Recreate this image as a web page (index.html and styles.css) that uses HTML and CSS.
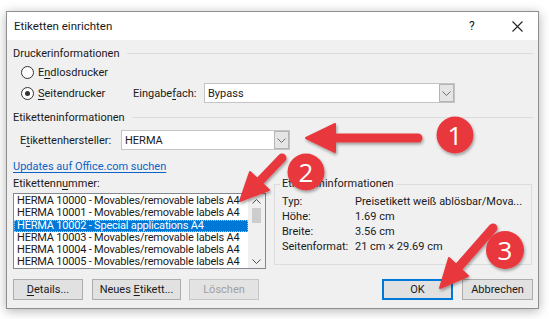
FILE: index.html
```html
<!DOCTYPE html>
<html lang="de">
<head>
    <meta charset="UTF-8">
    <title>Etiketten einrichten</title>
    <link rel="stylesheet" href="styles.css">
</head>
<body>
    <div class="dialog">
        <div class="titlebar">
            <span class="title">Etiketten einrichten</span>
            <span class="tb-help">?</span>
            <span class="tb-close">
                <svg width="11" height="11" viewBox="0 0 11 11"><path d="M0.5 0.5 L10.5 10.5 M10.5 0.5 L0.5 10.5" stroke="#222" stroke-width="1.1"/></svg>
            </span>
        </div>

        <div class="content">
            <div class="group-head"><span>Druckerinformationen</span></div>

            <div class="row radio-row first">
                <span class="radio"></span>
                <span>E<u>n</u>dlosdrucker</span>
            </div>
            <div class="row radio-row">
                <span class="radio checked"></span>
                <span class="radio-label"><u>S</u>eitendrucker</span>
                <span class="field-label">Eingabe<u>f</u>ach:</span>
                <div class="combo combo-tray">
                    <span class="combo-text">Bypass</span>
                    <span class="drop"><svg width="9" height="5" viewBox="0 0 9 5"><path d="M0.5 0.5 L4.5 4.5 L8.5 0.5" fill="none" stroke="#707070"/></svg></span>
                </div>
            </div>

            <div class="group-head second"><span>Etiketteninformationen</span></div>

            <div class="row maker-row">
                <span class="maker-label">E<u>t</u>ikettenhersteller:</span>
                <div class="combo combo-maker">
                    <span class="combo-text">HERMA</span>
                    <span class="drop"><svg width="9" height="5" viewBox="0 0 9 5"><path d="M0.5 0.5 L4.5 4.5 L8.5 0.5" fill="none" stroke="#707070"/></svg></span>
                </div>
            </div>

            <a class="link" href="#">Updates auf Office.com suchen</a>

            <div class="lower">
                <div class="list-col">
                    <div class="list-label">Etikettenn<u>u</u>mmer:</div>
                    <div class="listbox">
                        <div class="items">
                            <div class="item">HERMA 10000 - Movables/removable labels A4</div>
                            <div class="item">HERMA 10001 - Movables/removable labels A4</div>
                            <div class="item selected">HERMA 10002 - Special applications A4</div>
                            <div class="item">HERMA 10003 - Movables/removable labels A4</div>
                            <div class="item">HERMA 10004 - Movables/removable labels A4</div>
                            <div class="item">HERMA 10005 - Movables/removable labels A4</div>
                        </div>
                        <div class="scrollbar">
                            <span class="sb-arrow"><svg width="9" height="5" viewBox="0 0 9 5"><path d="M0.5 4.5 L4.5 0.5 L8.5 4.5" fill="none" stroke="#505050"/></svg></span>
                            <span class="sb-thumb"></span>
                            <span class="sb-track"></span>
                            <span class="sb-arrow"><svg width="9" height="5" viewBox="0 0 9 5"><path d="M0.5 0.5 L4.5 4.5 L8.5 0.5" fill="none" stroke="#505050"/></svg></span>
                        </div>
                    </div>
                </div>

                <fieldset class="info">
                    <legend>Etiketteninformationen</legend>
                    <div class="info-row"><span class="info-key">Typ:</span><span>Preisetikett weiß ablösbar/Mova...</span></div>
                    <div class="info-row"><span class="info-key">Höhe:</span><span>1.69 cm</span></div>
                    <div class="info-row"><span class="info-key">Breite:</span><span>3.56 cm</span></div>
                    <div class="info-row"><span class="info-key">Seitenformat:</span><span>21 cm × 29.69 cm</span></div>
                </fieldset>
            </div>

            <div class="buttons">
                <button class="btn btn-details"><u>D</u>etails...</button>
                <button class="btn btn-new">Neues <u>E</u>tikett...</button>
                <button class="btn btn-delete" disabled>Löschen</button>
                <button class="btn btn-ok">OK</button>
                <button class="btn btn-cancel">Abbrechen</button>
            </div>
        </div>
    </div>

    <!-- tutorial markers drawn over the dialog -->
    <svg class="marks" width="549" height="319" viewBox="0 0 549 319">
        <defs>
            <filter id="shadow" x="-20%" y="-20%" width="140%" height="140%">
                <feDropShadow dx="1" dy="2" stdDeviation="1.6" flood-color="#000" flood-opacity="0.35"/>
            </filter>
        </defs>
        <g filter="url(#shadow)">
            <line x1="418" y1="138" x2="332" y2="138" stroke="#e8383d" stroke-width="9" stroke-linecap="round"/>
            <polygon points="306,138 335,124 335,152" fill="#e8383d" stroke="#e8383d" stroke-width="2" stroke-linejoin="round"/>
            <circle cx="455" cy="135" r="18.5" fill="#e8383d"/>

            <line x1="282" y1="158" x2="258" y2="183" stroke="#e8383d" stroke-width="9" stroke-linecap="round"/>
            <polygon points="240,201 269,190 250,172" fill="#e8383d" stroke="#e8383d" stroke-width="2" stroke-linejoin="round"/>
            <circle cx="306" cy="172" r="18.5" fill="#e8383d"/>

            <line x1="493" y1="228" x2="457" y2="269" stroke="#e8383d" stroke-width="9" stroke-linecap="round"/>
            <polygon points="440,288 468,276 449,258" fill="#e8383d" stroke="#e8383d" stroke-width="2" stroke-linejoin="round"/>
            <circle cx="505" cy="250" r="19" fill="#e8383d"/>
        </g>
        <text class="mark-num" x="455" y="144.5">1</text>
        <text class="mark-num" x="306" y="181.5">2</text>
        <text class="mark-num" x="505" y="259.5">3</text>
    </svg>
</body>
</html>
```

FILE: styles.css
```css
body {
    margin: 0;
    width: 549px;
    height: 319px;
    position: relative;
    overflow: hidden;
    background-color: #fff;
    font-family: Roboto, 'Noto Sans', sans-serif;
    font-size: 11px;
    color: #1a1a1a;
}

u {
    text-decoration-thickness: 1px;
    text-underline-offset: 2px;
}

.dialog {
    margin: 11px 0 0 6px;
    width: 533px;
    height: 298px;
    box-sizing: border-box;
    border: 1px solid #8e8e8e;
    background-color: #f0f0f0;
    box-shadow: 0 2px 10px rgba(0, 0, 0, 0.3);
}

.titlebar {
    height: 28px;
    background-color: #fff;
    display: flex;
    align-items: center;
    padding-left: 7px;
    font-size: 11.5px;
}

.title {
    flex: 1;
}

.tb-help {
    width: 10px;
    margin-right: 33px;
    font-size: 12px;
}

.tb-close {
    display: flex;
    margin-right: 15px;
}

.content {
    padding: 6px 5px 0 6px;
}

.group-head {
    height: 14px;
    display: flex;
    align-items: center;
}

.group-head::after {
    content: "";
    flex: 1;
    height: 1px;
    margin-left: 7px;
    background-color: #dcdcdc;
}

.group-head.second {
    margin-top: 7px;
}

.row {
    height: 20px;
    display: flex;
    align-items: center;
}

.radio-row {
    margin-top: 1px;
    padding-left: 8px;
}

.radio-row.first {
    margin-top: 2px;
}

.radio {
    width: 11px;
    height: 11px;
    border: 1px solid #333;
    border-radius: 50%;
    background-color: #fff;
    margin-right: 4px;
    position: relative;
}

.radio.checked::after {
    content: "";
    position: absolute;
    left: 3px;
    top: 3px;
    width: 5px;
    height: 5px;
    border-radius: 50%;
    background-color: #333;
}

.radio-label {
    width: 95px;
}

.field-label {
    width: 71px;
}

.combo {
    height: 20px;
    box-sizing: border-box;
    border: 1px solid #c4c4c4;
    background-color: #fff;
    display: flex;
    align-items: center;
}

.combo-tray {
    width: 251px;
}

.combo-maker {
    width: 169px;
}

.combo-text {
    flex: 1;
    padding-left: 3px;
}

.drop {
    width: 15px;
    height: 18px;
    box-sizing: border-box;
    border: 1px solid #b4b4b4;
    background-color: #e5e5e5;
    display: flex;
    align-items: center;
    justify-content: center;
}

.maker-row {
    margin-top: 6px;
    padding-left: 7px;
}

.maker-label {
    width: 101px;
}

.link {
    display: block;
    margin-top: 10px;
    height: 14px;
    line-height: 14px;
    color: #0b63c8;
    text-decoration: underline;
    text-underline-offset: 2px;
}

.lower {
    margin-top: 3px;
    display: flex;
    gap: 8px;
}

.list-col {
    width: 253px;
}

.list-label {
    height: 14px;
    line-height: 14px;
}

.listbox {
    margin-top: 2px;
    height: 76px;
    box-sizing: border-box;
    border: 1px solid #828790;
    background-color: #fff;
    display: flex;
}

.items {
    flex: 1;
    padding-top: 1px;
}

.item {
    height: 12.3px;
    line-height: 12.3px;
    padding-left: 3px;
    white-space: nowrap;
    letter-spacing: -0.2px;
}

.item.selected {
    background-color: #0078d7;
    color: #fff;
    outline: 1px dotted #9cc7ee;
    outline-offset: -1px;
}

.scrollbar {
    width: 17px;
    background-color: #f0f0f0;
    display: flex;
    flex-direction: column;
    align-items: center;
}

.sb-arrow {
    height: 14px;
    display: flex;
    align-items: center;
}

.sb-thumb {
    width: 9px;
    height: 15px;
    background-color: #cdcdcd;
}

.sb-track {
    flex: 1;
}

.info {
    margin: 0;
    width: 258px;
    height: 88px;
    box-sizing: border-box;
    border: 1px solid #dcdcdc;
    padding: 3px 0 0 5px;
}

.info legend {
    padding: 0 2px;
    line-height: 14px;
}

.info-row {
    height: 15px;
    display: flex;
    align-items: center;
    padding-left: 2px;
}

.info-key {
    width: 73px;
}

.buttons {
    margin-top: 10px;
    display: flex;
}

.btn {
    height: 21px;
    box-sizing: border-box;
    border: 1px solid #adadad;
    background-color: #e1e1e1;
    font-family: inherit;
    font-size: 11px;
    color: #1a1a1a;
    padding: 0;
}

.btn-details {
    width: 70px;
}

.btn-new {
    width: 89px;
    margin-left: 9px;
}

.btn-delete {
    width: 70px;
    margin-left: 8px;
    color: #a0a0a0;
    background-color: #e3e3e3;
    border-color: #c6c6c6;
}

.btn-ok {
    width: 71px;
    margin-left: auto;
    border: 2px solid #0078d7;
}

.btn-cancel {
    width: 71px;
    margin-left: 9px;
}

.marks {
    position: absolute;
    left: 0;
    top: 0;
}

.mark-num {
    font-family: 'Open Sans', sans-serif;
    font-size: 26px;
    fill: #fff;
    text-anchor: middle;
}
```
